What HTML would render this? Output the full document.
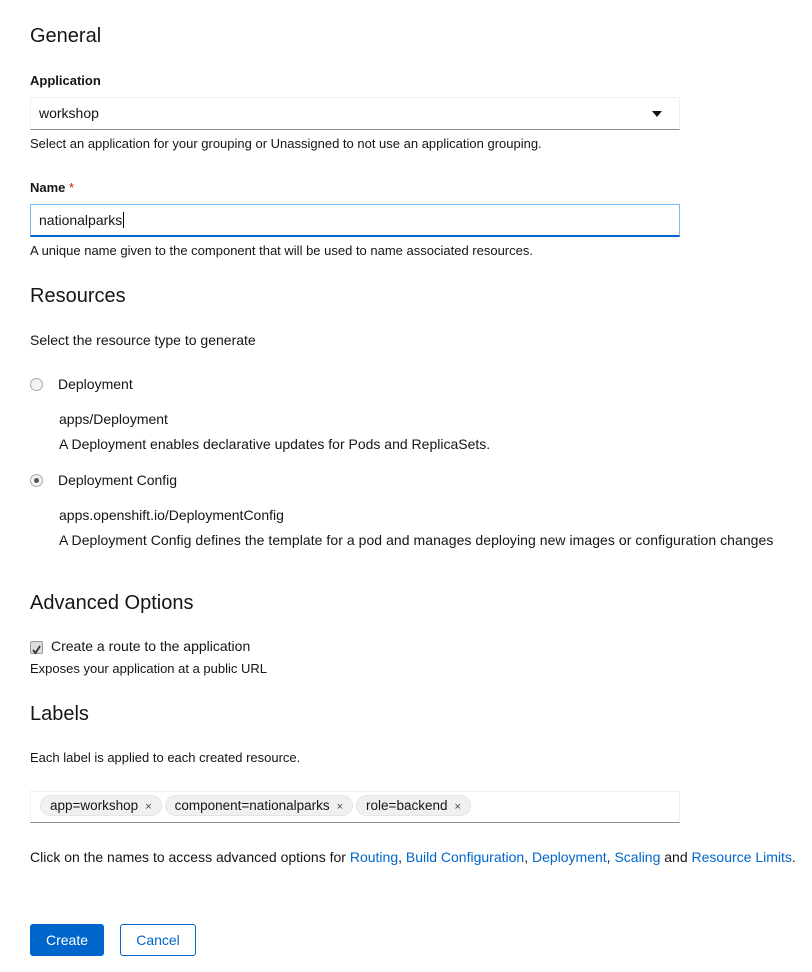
<!DOCTYPE html>
<html><head><style>
body{margin:0;width:812px;height:972px;background:#fff;font-family:"Liberation Sans",sans-serif;color:#151515;position:relative;overflow:hidden}
.a{position:absolute;white-space:nowrap}
h2{position:absolute;margin:0;font-weight:400;font-size:20px;left:30px;white-space:nowrap}
.lbl{font-weight:700;font-size:13px}
.s{font-size:13px}
.t{font-size:14px}
.box{position:absolute;left:30px;width:648px;border:1px solid #f0f0f0;border-bottom:1px solid #8a8d90;background:#fff}
.chip{display:inline-block;background:#f0f0f0;border:1px solid #e4e4e4;border-radius:12px;padding:2px 9px;font-size:13.5px;margin-right:3px;color:#151515}
.chip span{font-size:11px;margin-left:7px;color:#444}
a{color:#0066cc;text-decoration:none}
.radio{position:absolute;left:30px;width:11px;height:11px;border:1px solid #aaa;border-radius:50%;background:#f3f3f3}
</style></head><body>
<h2 style="top:25px">General</h2>
<div class="a lbl" style="left:30px;top:73px">Application</div>
<div class="box" style="top:97px;height:31px"><span class="a t" style="left:8px;top:7px">workshop</span>
<svg class="a" style="left:621px;top:13px" width="10" height="6"><path d="M0 0H10L5 6Z" fill="#151515"/></svg></div>
<div class="a s" style="left:30px;top:136px">Select an application for your grouping or Unassigned to not use an application grouping.</div>
<div class="a lbl" style="left:30px;top:180px">Name <span style="color:#c9190b;font-weight:400">*</span></div>
<div class="box" style="top:204px;height:30px;border:1px solid #73bcf7;border-bottom:2px solid #0066cc"><span class="a t" style="left:8px;top:7px">nationalparks<span style="border-left:1px solid #000;margin-left:1px"></span></span></div>
<div class="a s" style="left:30px;top:243px">A unique name given to the component that will be used to name associated resources.</div>
<h2 style="top:285px">Resources</h2>
<div class="a t" style="left:30px;top:332px">Select the resource type to generate</div>
<div class="radio" style="top:378px"></div>
<div class="a t" style="left:58px;top:376px">Deployment</div>
<div class="a t" style="left:59px;top:411px">apps/Deployment</div>
<div class="a t" style="left:59px;top:436px">A Deployment enables declarative updates for Pods and ReplicaSets.</div>
<div class="radio" style="top:474px"><div style="position:absolute;left:3px;top:3px;width:5px;height:5px;border-radius:50%;background:#555"></div></div>
<div class="a t" style="left:58px;top:472px">Deployment Config</div>
<div class="a t" style="left:59px;top:507px">apps.openshift.io/DeploymentConfig</div>
<div class="a t" style="left:59px;top:532px;letter-spacing:0.05px">A Deployment Config defines the template for a pod and manages deploying new images or configuration changes</div>
<h2 style="top:592px">Advanced Options</h2>
<div class="a" style="left:30px;top:641px;width:11px;height:11px;border:1px solid #999;border-radius:2px;background:#ddd"><svg width="11" height="11"><path d="M2 6L4.5 9L9 2" stroke="#333" stroke-width="1.8" fill="none"/></svg></div>
<div class="a t" style="left:51px;top:638px">Create a route to the application</div>
<div class="a s" style="left:30px;top:661px">Exposes your application at a public URL</div>
<h2 style="top:703px">Labels</h2>
<div class="a s" style="left:30px;top:750px">Each label is applied to each created resource.</div>
<div class="box" style="top:791px;height:30px"><div class="a" style="left:9px;top:3px"><span class="chip">app=workshop<span>×</span></span><span class="chip">component=nationalparks<span>×</span></span><span class="chip">role=backend<span>×</span></span></div></div>
<div class="a t" style="left:30px;top:849px">Click on the names to access advanced options for <a>Routing</a>, <a>Build Configuration</a>, <a>Deployment</a>, <a>Scaling</a> and <a>Resource Limits</a>.</div>
<div class="a" style="left:30px;top:924px;width:74px;height:32px;background:#0066cc;border-radius:3px;color:#fff;font-size:14px;text-align:center;line-height:32px">Create</div>
<div class="a" style="left:120px;top:924px;width:74px;height:30px;border:1px solid #0066cc;border-radius:3px;color:#0066cc;font-size:14px;text-align:center;line-height:30px">Cancel</div>
</body></html>
